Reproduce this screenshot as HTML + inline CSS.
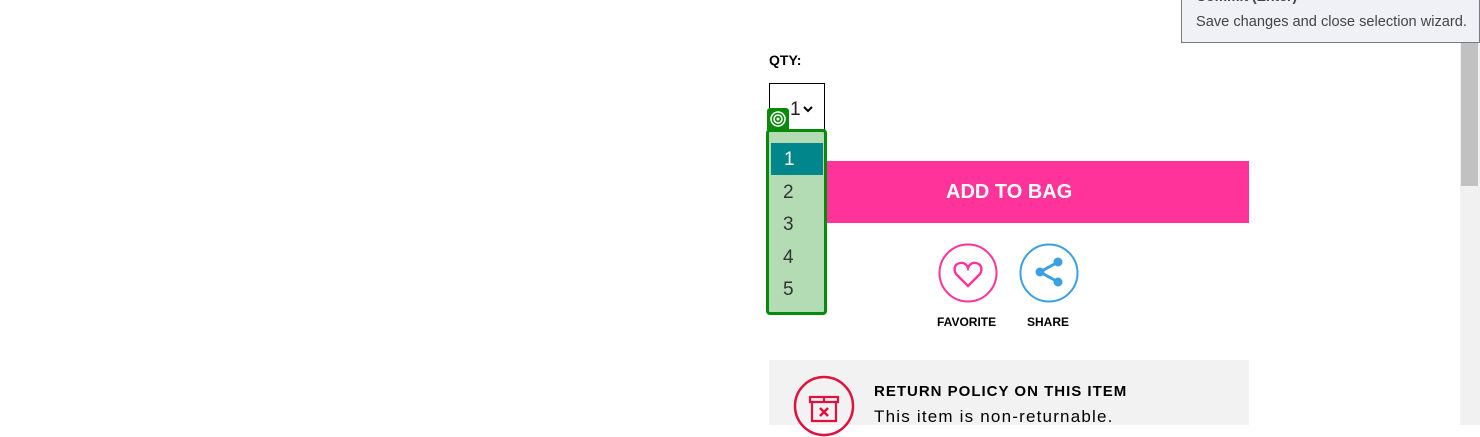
<!DOCTYPE html>
<html><head><meta charset="utf-8"><style>
*{margin:0;padding:0;box-sizing:border-box}
body{width:1480px;height:425px;overflow:hidden;background:#fff;font-family:"Liberation Sans",sans-serif;position:relative}
.a{position:absolute}
</style></head><body>
<div class="a" style="left:1460px;top:0;width:20px;height:425px;background:#f1f1f1"></div>
<div class="a" style="left:1461px;top:42px;width:17px;height:144px;background:#c1c1c1"></div>
<div class="a" style="left:1181px;top:-2px;width:299px;height:45px;background:#f0f1f6;border:1px solid #7a7a7a"></div>
<div class="a" style="left:1196px;top:-12px;font-size:14px;font-weight:bold;color:#444">Commit (Enter)</div>
<div class="a" style="left:1196px;top:14px;font-size:14.6px;color:#444">Save changes and close selection wizard.</div>

<div class="a" style="left:769px;top:52px;font-size:14px;font-weight:bold;color:#000">QTY:</div>
<div class="a" style="left:769px;top:83px;width:56px;height:56px;border:1px solid #000"></div>
<div class="a" style="left:790px;top:99px;font-size:19px;color:#222">1</div>
<svg class="a" style="left:803px;top:105px" width="10" height="8"><path d="M1 2L5 6L9 2" stroke="#000" stroke-width="2" fill="none"/></svg>

<div class="a" style="left:824px;top:161px;width:425px;height:62px;background:#ff3399"></div>
<div class="a" style="left:769px;top:161px;width:60px;height:62px;background:#ff3399"></div>
<div class="a" style="left:946px;top:181px;font-size:20px;font-weight:bold;color:#fff">ADD TO BAG</div>

<div class="a" style="left:767px;top:108px;width:22px;height:22px;background:#0a8a0a;border-radius:3px 3px 0 0"></div>
<svg class="a" style="left:769px;top:110px" width="18" height="18"><circle cx="9" cy="9" r="7" stroke="#fff" stroke-width="1.5" fill="none"/><circle cx="9" cy="9" r="4" stroke="#fff" stroke-width="1.5" fill="none"/><circle cx="9" cy="9" r="1.5" fill="#fff"/></svg>
<div class="a" style="left:766px;top:129px;width:61px;height:186px;border:3px solid #0a8a0a;border-radius:4px;background:#b3dcb5"></div>
<div class="a" style="left:771px;top:143px;width:52px;height:32px;background:#00868b"></div>
<div class="a" style="left:784px;top:149px;font-size:19px;color:#fff">1</div>
<div class="a" style="left:783px;top:182px;font-size:19px;color:#333">2</div>
<div class="a" style="left:783px;top:214px;font-size:19px;color:#333">3</div>
<div class="a" style="left:783px;top:247px;font-size:19px;color:#333">4</div>
<div class="a" style="left:783px;top:279px;font-size:19px;color:#333">5</div>

<svg class="a" style="left:938px;top:243px" width="60" height="60"><circle cx="30" cy="30" r="28.5" stroke="#ff3399" stroke-width="2" fill="none"/><path d="M30 43L19 32C15 28 16 21 22 20C26 19 29 22 30 25C31 22 34 19 38 20C44 21 45 28 41 32Z" stroke="#ff3399" stroke-width="2.4" fill="none"/></svg>
<svg class="a" style="left:1019px;top:243px" width="60" height="60"><circle cx="30" cy="30" r="28.5" stroke="#3aa0e3" stroke-width="2" fill="none"/><path d="M39 19L21 29L39 39" stroke="#3aa0e3" stroke-width="3" fill="none"/><circle cx="39" cy="19" r="4.5" fill="#3aa0e3"/><circle cx="21" cy="29" r="4.5" fill="#3aa0e3"/><circle cx="39" cy="39" r="4.5" fill="#3aa0e3"/></svg>
<div class="a" style="left:937px;top:315px;font-size:12px;font-weight:bold;color:#000">FAVORITE</div>
<div class="a" style="left:1027px;top:315px;font-size:12px;font-weight:bold;color:#000">SHARE</div>

<div class="a" style="left:769px;top:360px;width:480px;height:65px;background:#f2f2f2"></div>
<svg class="a" style="left:793px;top:375px" width="62" height="62"><circle cx="31" cy="31" r="29" stroke="#e0103f" stroke-width="2.5" fill="none"/><path d="M17 22H45V27H17Z M19 27V46H43V27 M31 22V27" stroke="#e0103f" stroke-width="2.2" fill="none"/><path d="M27 33L35 41M35 33L27 41" stroke="#e0103f" stroke-width="2.5"/></svg>
<div class="a" style="left:874px;top:383px;font-size:15px;font-weight:bold;letter-spacing:1px;color:#000">RETURN POLICY ON THIS ITEM</div>
<div class="a" style="left:874px;top:407px;font-size:17px;letter-spacing:1.2px;color:#000">This item is non-returnable.</div>
</body></html>
